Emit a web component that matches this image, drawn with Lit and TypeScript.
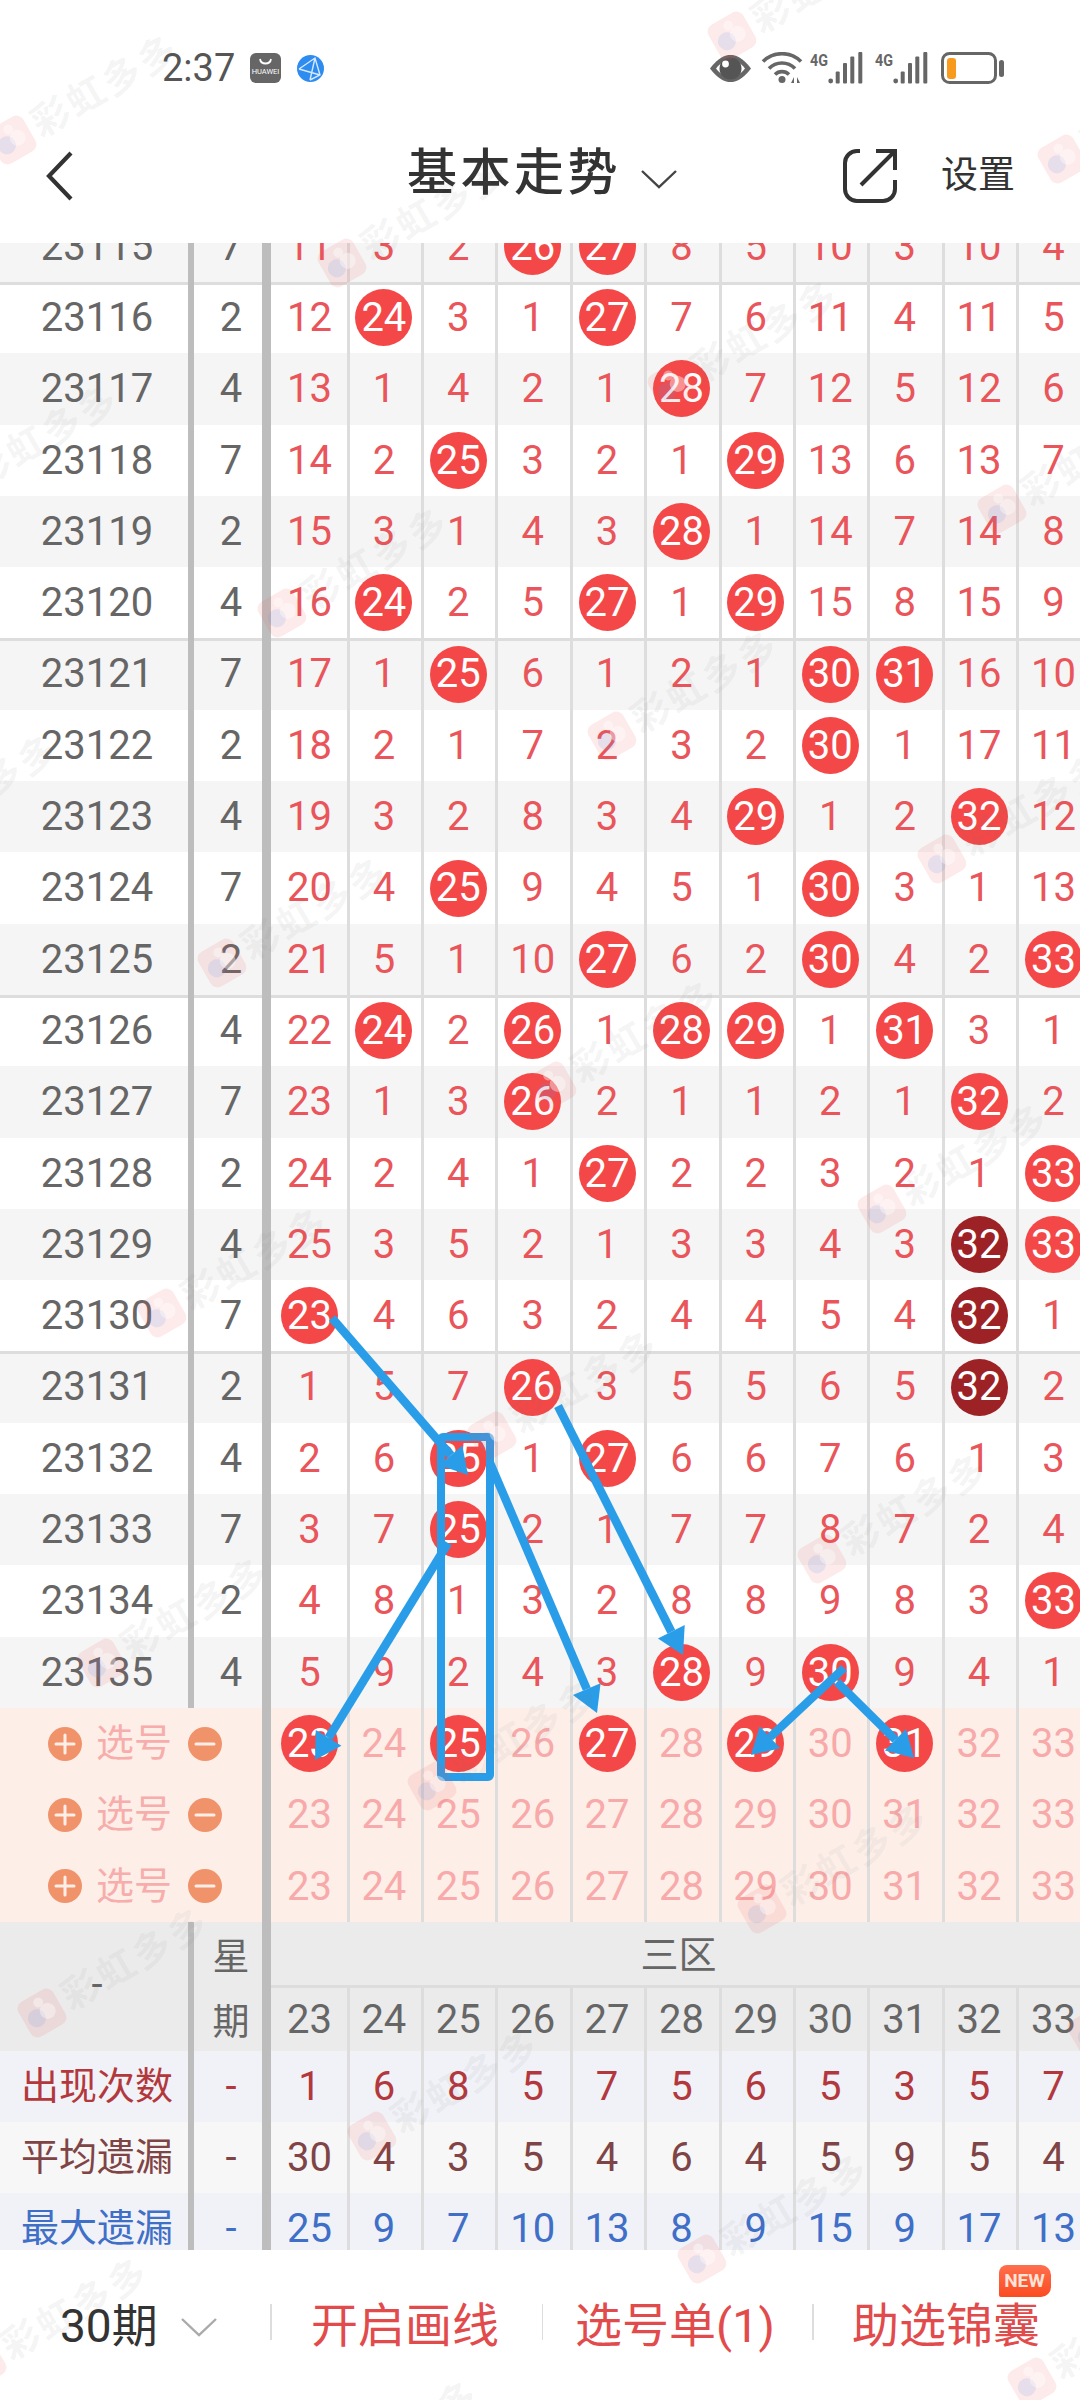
import { LitElement, html, css, svg } from "lit";
import { customElement } from "lit/decorators.js";

const ROWS: [number, number, string][] = [
  [23115, 7, "11 3 2 *26 *27 8 5 10 3 10 4"],
  [23116, 2, "12 *24 3 1 *27 7 6 11 4 11 5"],
  [23117, 4, "13 1 4 2 1 *28 7 12 5 12 6"],
  [23118, 7, "14 2 *25 3 2 1 *29 13 6 13 7"],
  [23119, 2, "15 3 1 4 3 *28 1 14 7 14 8"],
  [23120, 4, "16 *24 2 5 *27 1 *29 15 8 15 9"],
  [23121, 7, "17 1 *25 6 1 2 1 *30 *31 16 10"],
  [23122, 2, "18 2 1 7 2 3 2 *30 1 17 11"],
  [23123, 4, "19 3 2 8 3 4 *29 1 2 *32 12"],
  [23124, 7, "20 4 *25 9 4 5 1 *30 3 1 13"],
  [23125, 2, "21 5 1 10 *27 6 2 *30 4 2 *33"],
  [23126, 4, "22 *24 2 *26 1 *28 *29 1 *31 3 1"],
  [23127, 7, "23 1 3 *26 2 1 1 2 1 *32 2"],
  [23128, 2, "24 2 4 1 *27 2 2 3 2 1 *33"],
  [23129, 4, "25 3 5 2 1 3 3 4 3 #32 *33"],
  [23130, 7, "*23 4 6 3 2 4 4 5 4 #32 1"],
  [23131, 2, "1 5 7 *26 3 5 5 6 5 #32 2"],
  [23132, 4, "2 6 *25 1 *27 6 6 7 6 1 3"],
  [23133, 7, "3 7 *25 2 1 7 7 8 7 2 4"],
  [23134, 2, "4 8 1 3 2 8 8 9 8 3 *33"],
  [23135, 4, "5 9 2 4 3 *28 9 *30 9 4 1"],
];
const PINK = [
  "*23 24 *25 26 *27 28 *29 30 *31 32 33",
  "23 24 25 26 27 28 29 30 31 32 33",
  "23 24 25 26 27 28 29 30 31 32 33",
];
const NUMS = "23 24 25 26 27 28 29 30 31 32 33".split(" ");
const STATS: [string, string, string][] = [
  ["出现次数", "s1", "1 6 8 5 7 5 6 5 3 5 7"],
  ["平均遗漏", "s2", "30 4 3 5 4 6 4 5 9 5 4"],
  ["最大遗漏", "s3", "25 9 7 10 13 8 9 15 9 17 13"],
];
const ARROWS = [
  [332, 1318, 468, 1475],
  [558, 1406, 683, 1655],
  [490, 1463, 597, 1713],
  [448, 1543, 315, 1760],
  [844, 1668, 751, 1755],
  [837, 1682, 914, 1758],
];

function marks() {
  const out: { x: number; y: number }[] = [];
  for (let a = -1; a <= 5; a++) {
    for (let b = -7; b <= 2; b++) {
      const x = 12 + a * 330 + b * 60;
      const y = 140 + a * 123 - b * 350;
      if (x > -150 && x < 1100 && y > -20 && y < 2520) out.push({ x, y });
    }
  }
  return out;
}

@customElement("app-root")
export class AppRoot extends LitElement {
  static styles = css`
    :host { display: block; width: 1080px; height: 2400px; overflow: hidden; background: #fff;
      font-family: Roboto, "Noto Sans CJK SC", sans-serif; }
    .page { position: relative; width: 1080px; height: 2400px; overflow: hidden; background: #fff; }

    .status { height: 100px; box-sizing: border-box; padding: 36px 0 0 162px; display: flex; align-items: center; }
    .time { font-size: 38px; line-height: 38px; color: #555; width: 88px; flex: none; }
    .globe { margin-left: 16px; }
    .sysicons { margin-left: 386px; }
    svg { display: block; flex: none; }

    .nav { height: 143px; box-sizing: border-box; padding-top: 8px; display: flex; align-items: center; }
    .back { margin-left: 45px; }
    .title { margin-left: 333px; font-size: 50px; font-weight: 500; letter-spacing: 3.5px; color: #333; line-height: 60px; width: 232px; flex: none; margin-top: -6px; }
    .tchev { margin-top: 6px; margin-left: 1px; }
    .share { margin-left: 165px; margin-top: 0; }
    .setting { margin-left: 44px; font-size: 37px; color: #333; line-height: 44px; margin-top: 1px; }

    .table { height: 2007px; overflow: hidden; }
    .inner { margin-top: -32.3px; }
    .row { display: flex; height: 71.3px; font-size: 40px; line-height: 71.3px; color: #666; }
    .row.alt { background: #f5f5f5; }
    .row.sep { box-shadow: inset 0 3px #ddd; }
    .c1 { width: 188px; flex: none; padding-left: 6px; box-sizing: border-box; text-align: center; }
    .v1 { width: 6px; flex: none; background: #bdbdbd; }
    .c2 { width: 68px; flex: none; padding-left: 6px; box-sizing: border-box; text-align: center; }
    .v2 { width: 9px; flex: none; background: #bdbdbd; }
    .cells { display: flex; flex: none; padding-left: 1.3px; }
    .cell { width: 74.4px; flex: none; display: flex; align-items: center; justify-content: center;
      box-shadow: inset 3px 0 #ddd; color: #e9555a; }
    .cell:first-child { box-shadow: none; }
    .ball { width: 57px; height: 57px; border-radius: 50%; background: #f44848; color: #fff;
      display: flex; align-items: center; justify-content: center; }
    .ball.dark { background: #9c2226; }

    .row.pink { background: #fdeee8; }
    .pick { width: 262px; flex: none; display: flex; align-items: center; padding-left: 48px; box-sizing: border-box; }
    .pick .lbl { margin-left: 14px; width: 92px; flex: none; font-size: 38px; color: #f7adab; }
    .pink .cell { color: #f8a9a9; }
    .pink .ball { color: #fff; }

    .head { display: flex; height: 129px; background: #ebebeb; color: #666; font-size: 40px; }
    .hc1 { width: 188px; flex: none; padding: 0 0 4px 6px; box-sizing: border-box; display: flex; align-items: center; justify-content: center; }
    .hc2 { width: 68px; flex: none; padding-left: 6px; box-sizing: border-box; font-size: 37px; }
    .hc2 div { height: 64.5px; display: flex; align-items: center; justify-content: center; }
    .hright { flex: none; width: 809px; }
    .zone { height: 66px; box-sizing: border-box; border-bottom: 3px solid #ddd; display: flex; align-items: center; justify-content: center;
      font-size: 38px; padding: 0 0 4px 6px; }
    .hnums { display: flex; padding-left: 1.3px; height: 63px; }
    .hnums .cell { color: #666; }

    .row.s1, .row.s3 { background: #f1f2f7; }
    .row.s2 { background: #f7f7f7; }
    .s1, .s1 .cell { color: #b3383d; }
    .s2, .s2 .cell { color: #7f4445; }
    .s3, .s3 .cell { color: #3f6fc7; }
    .lab { font-size: 38px; white-space: nowrap; }

    .foot { height: 150px; display: flex; align-items: center; padding-bottom: 7px; box-sizing: border-box; }
    .sec { position: relative; flex: none; height: 100%; box-sizing: border-box; display: flex; align-items: center; justify-content: center;
      font-size: 47px; color: #e24b4c; }
    .sec1 { width: 270px; justify-content: flex-start; padding-left: 60px; color: #333; font-size: 46px; }
    .sec1 svg { margin-left: 22px; margin-top: 10px; }
    .sec2 { width: 270px; padding-right: 3px; }
    .sec3 { width: 269px; padding-right: 5px; }
    .sec4 { width: 268px; padding-right: 3px; }
    .divd { width: 1.5px; height: 36px; background: #ddd; flex: none; }
    .new { position: absolute; left: 185px; top: 15px; width: 52px; height: 32px; border-radius: 8px 10px 10px 2px;
      background: linear-gradient(180deg, #ff6f4d, #fb4b22); color: #ffe3d6; font-size: 19px; font-weight: 700; line-height: 32px;
      text-align: center; }

    .wm { position: absolute; left: 0; top: 0; width: 1080px; height: 2400px; overflow: hidden; pointer-events: none; }
    .mark { position: absolute; width: 0; height: 0; transform: rotate(-30deg); transform-origin: 0 0; }
    .mark svg { position: absolute; left: -23px; top: -23px; }
    .mark span { position: absolute; left: 26px; top: -28px; white-space: nowrap; font-size: 38px; line-height: 56px; letter-spacing: 3px;
      font-weight: 700; color: rgba(110, 110, 110, 0.075); }
    .lines { position: absolute; left: 0; top: 0; pointer-events: none; }
  `;

  cell(v: string) {
    if (v[0] === "*") return html`<div class="cell"><div class="ball">${v.slice(1)}</div></div>`;
    if (v[0] === "#") return html`<div class="cell"><div class="ball dark">${v.slice(1)}</div></div>`;
    return html`<div class="cell">${v}</div>`;
  }

  round(kind: "plus" | "minus") {
    return html`<svg width="34" height="34" viewBox="0 0 34 34">
      <circle cx="17" cy="17" r="17" fill="#f0936b"></circle>
      <path d=${kind === "plus" ? "M8 17H26M17 8V26" : "M8 17H26"} stroke="#fdeee8" stroke-width="3" stroke-linecap="round"></path>
    </svg>`;
  }

  arrows() {
    return svg`${ARROWS.map(([x1, y1, x2, y2]) => {
      const dx = x2 - x1, dy = y2 - y1, l = Math.hypot(dx, dy);
      const ux = dx / l, uy = dy / l;
      const bx = x2 - ux * 26, by = y2 - uy * 26;
      const pts = `${x2},${y2} ${bx - uy * 15},${by + ux * 15} ${bx + uy * 15},${by - ux * 15}`;
      return svg`<line x1=${x1} y1=${y1} x2=${bx} y2=${by} stroke="#2a9de8" stroke-width="8.5"></line>
        <polygon points=${pts} fill="#2a9de8"></polygon>`;
    })}`;
  }

  render() {
    return html`<div class="page">
      <div class="status">
        <div class="time">2:37</div>
        <svg width="31" height="30" viewBox="0 0 31 30">
          <rect width="31" height="30" rx="6" fill="#666"></rect>
          <path d="M10 6C11 12 20 12 21 6" fill="none" stroke="#fff" stroke-width="1.8"></path>
          <text x="15.5" y="21" text-anchor="middle" font-size="7.5" fill="#fff" font-family="Roboto">HUAWEI</text>
        </svg>
        <svg class="globe" width="27" height="27" viewBox="0 0 27 27">
          <circle cx="13.5" cy="13.5" r="13.5" fill="#2e8bf0"></circle>
          <path d="M2 14L18 3L23 20L13 25M2 14L23 20M18 3L13 25" fill="none" stroke="#d5e9ff" stroke-width="1.4"></path>
        </svg>
        <svg class="sysicons" width="294" height="32" viewBox="0 0 294 32">
          <path d="M0 16.5C9 5 15 3 20.5 3S32 5 41 16.5C32 28 26 30 20.5 30S9 28 0 16.5Z" fill="#666"></path>
          <path d="M6 16.5C11 10 16 8 20.5 8S30 10 35 16.5C30 23 25 25 20.5 25S11 23 6 16.5Z" fill="#fff"></path>
          <circle cx="20.5" cy="16.5" r="11" fill="#555"></circle>
          <circle cx="15.5" cy="12" r="3.4" fill="#fff"></circle>
          <g fill="none" stroke="#666" stroke-width="3.6">
            <path d="M53 9.5A27 27 0 0 1 91 9.5"></path>
            <path d="M59 16.5A18 18 0 0 1 85 16.5"></path>
            <path d="M65 22.5A10 10 0 0 1 79 22.5"></path>
          </g>
          <circle cx="72" cy="27.5" r="3.5" fill="#666"></circle>
          <path d="M84 25V31H81ZM87 25L90 31H87Z" fill="#666"></path>
          ${[0, 65].map(
            (o) => svg`<g transform="translate(${o} 0)" fill="#666">
              <text x="100" y="14" font-size="17" font-weight="700" font-family="Roboto" textLength="18" lengthAdjust="spacingAndGlyphs">4G</text>
              <circle cx="120.7" cy="29" r="2.4"></circle>
              <rect x="125.7" y="19.5" width="4" height="12" rx="1"></rect>
              <rect x="133" y="11" width="4" height="20.5" rx="1"></rect>
              <rect x="140.3" y="4.5" width="4" height="27" rx="1"></rect>
              <rect x="148.3" y="0" width="4" height="31.5" rx="1"></rect>
            </g>`
          )}
          <rect x="232.5" y="1.5" width="53" height="29" rx="7" fill="none" stroke="#666" stroke-width="3"></rect>
          <rect x="237" y="6" width="9" height="21" rx="3" fill="#f79a1e"></rect>
          <rect x="289" y="8" width="5" height="17" rx="2.5" fill="#666"></rect>
        </svg>
      </div>

      <div class="nav">
        <svg class="back" width="29" height="50" viewBox="0 0 29 50">
          <path d="M26 2L4 25L26 48" fill="none" stroke="#333" stroke-width="4.2"></path>
        </svg>
        <div class="title">基本走势</div>
        <svg class="tchev" width="38" height="20" viewBox="0 0 38 20">
          <path d="M2 2L19 18L36 2" fill="none" stroke="#444" stroke-width="2.4"></path>
        </svg>
        <svg class="share" width="54" height="54" viewBox="0 0 54 54">
          <path d="M17 2H14A12 12 0 0 0 2 14V40A12 12 0 0 0 14 52H40A12 12 0 0 0 52 40V31M18 36L51 3M33 2H52V21" fill="none" stroke="#333" stroke-width="4"></path>
        </svg>
        <div class="setting">设置</div>
      </div>

      <div class="table">
        <div class="inner">
          ${ROWS.map(
            ([id, w, vals], i) => html`<div class="row ${i % 2 === 0 ? "alt" : ""} ${i % 5 === 1 ? "sep" : ""}">
              <div class="c1">${id}</div>
              <div class="v1"></div>
              <div class="c2">${w}</div>
              <div class="v2"></div>
              <div class="cells">${vals.split(" ").map((v) => this.cell(v))}</div>
            </div>`
          )}
          ${PINK.map(
            (vals) => html`<div class="row pink">
              <div class="pick">${this.round("plus")}<span class="lbl">选号</span>${this.round("minus")}</div>
              <div class="v2"></div>
              <div class="cells">${vals.split(" ").map((v) => this.cell(v))}</div>
            </div>`
          )}
          <div class="head">
            <div class="hc1">-</div>
            <div class="v1"></div>
            <div class="hc2"><div>星</div><div>期</div></div>
            <div class="v2"></div>
            <div class="hright">
              <div class="zone">三区</div>
              <div class="hnums">${NUMS.map((v) => this.cell(v))}</div>
            </div>
          </div>
          ${STATS.map(
            ([name, cls, vals]) => html`<div class="row ${cls}">
              <div class="c1 lab">${name}</div>
              <div class="v1"></div>
              <div class="c2">-</div>
              <div class="v2"></div>
              <div class="cells">${vals.split(" ").map((v) => this.cell(v))}</div>
            </div>`
          )}
        </div>
      </div>

      <div class="foot">
        <div class="sec sec1">30期
          <svg width="38" height="20" viewBox="0 0 38 20"><path d="M2 2L19 18L36 2" fill="none" stroke="#aaa" stroke-width="2.4"></path></svg>
        </div>
        <div class="divd"></div>
        <div class="sec sec2">开启画线</div>
        <div class="divd"></div>
        <div class="sec sec3">选号单(1)</div>
        <div class="divd"></div>
        <div class="sec sec4">助选锦囊<div class="new">NEW</div></div>
      </div>

      <svg class="lines" width="1080" height="2400" viewBox="0 0 1080 2400">
        ${this.arrows()}
        <rect x="441" y="1437" width="49" height="340" rx="2" fill="none" stroke="#2a9de8" stroke-width="8"></rect>
      </svg>

      <div class="wm">
        ${marks().map(
          (m) => html`<div class="mark" style="left:${m.x}px;top:${m.y}px">
            <svg width="46" height="46" viewBox="0 0 46 46">
              <rect x="3" y="3" width="40" height="40" rx="8" fill="rgba(240,80,80,0.12)"></rect>
              <circle cx="16" cy="25" r="9" fill="rgba(90,150,235,0.14)"></circle>
              <circle cx="29" cy="24" r="8" fill="rgba(255,255,255,0.4)"></circle>
              <circle cx="25" cy="12" r="5" fill="rgba(255,255,255,0.4)"></circle>
            </svg>
            <span>彩虹多多</span>
          </div>`
        )}
      </div>
    </div>`;
  }
}
